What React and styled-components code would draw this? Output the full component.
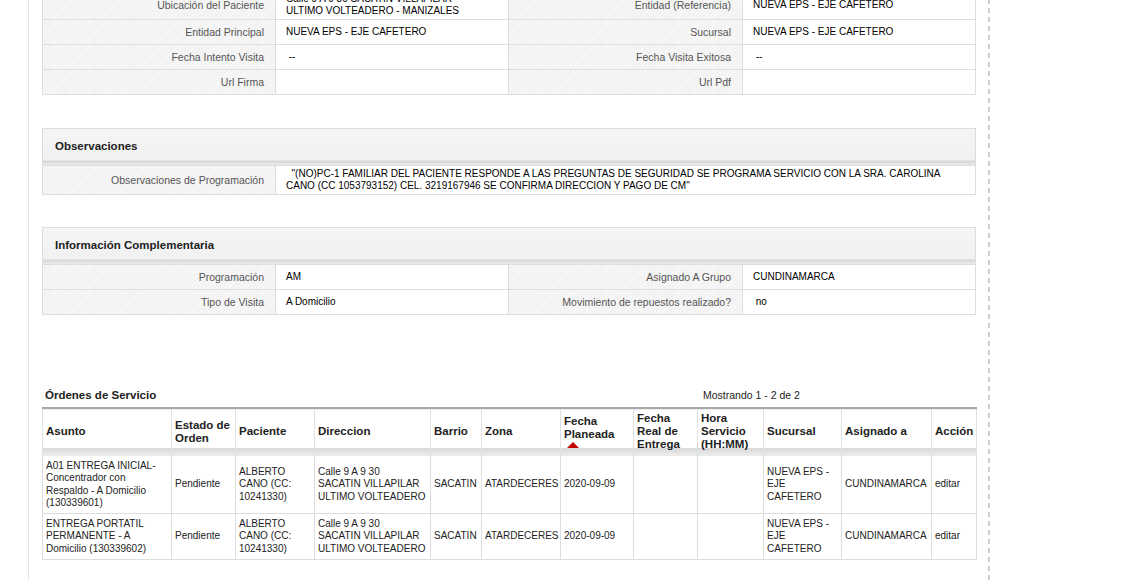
import React from 'react'
import styled, { createGlobalStyle } from 'styled-components'

const GlobalStyle = createGlobalStyle`
    html, body {
        margin: 0;
        padding: 0;
        background: #fff;
        font-family: "Liberation Sans", Arial, sans-serif;
        overflow: hidden;
    }
`

const address = ['Calle 9 A 9 30', 'SACATIN VILLAPILAR', 'ULTIMO VOLTEADERO']

const topRows = [
    ['Ubicación del Paciente', ['Calle 9 A 9 30 SACATIN VILLAPILAR', 'ULTIMO VOLTEADERO - MANIZALES'], 'Entidad (Referencia)', 'NUEVA EPS - EJE CAFETERO'],
    ['Entidad Principal', 'NUEVA EPS - EJE CAFETERO', 'Sucursal', 'NUEVA EPS - EJE CAFETERO'],
    ['Fecha Intento Visita', '\u00a0--', 'Fecha Visita Exitosa', '\u00a0--'],
    ['Url Firma', '', 'Url Pdf', ''],
]

const extraRows = [
    ['Programación', 'AM', 'Asignado A Grupo', 'CUNDINAMARCA'],
    ['Tipo de Visita', 'A Domicilio', 'Movimiento de repuestos realizado?', '\u00a0no'],
]

const columns = [
    { title: 'Asunto', width: 129 },
    { title: 'Estado de Orden', width: 64 },
    { title: 'Paciente', width: 79 },
    { title: 'Direccion', width: 116 },
    { title: 'Barrio', width: 51 },
    { title: 'Zona', width: 79 },
    { title: 'Fecha Planeada', width: 73, sorted: true },
    { title: 'Fecha Real de Entrega', width: 64 },
    { title: 'Hora Servicio (HH:MM)', width: 66 },
    { title: 'Sucursal', width: 78 },
    { title: 'Asignado a', width: 90 },
    { title: 'Acción', width: 45 },
]

const orders = [
    ['A01 ENTREGA INICIAL-Concentrador con Respaldo - A Domicilio (130339601)', 'Pendiente', 'ALBERTO CANO (CC: 10241330)', address, 'SACATIN', 'ATARDECERES', '2020-09-09', '', '', 'NUEVA EPS - EJE CAFETERO', 'CUNDINAMARCA', 'editar'],
    ['ENTREGA PORTATIL PERMANENTE - A Domicilio (130339602)', 'Pendiente', 'ALBERTO CANO (CC: 10241330)', address, 'SACATIN', 'ATARDECERES', '2020-09-09', '', '', 'NUEVA EPS - EJE CAFETERO', 'CUNDINAMARCA', 'editar'],
]

// a value is either plain text or a list of lines
function Lines({ value }) {
    if (!Array.isArray(value)) return value
    return value.map((line, i) => (
        <React.Fragment key={i}>
            {i > 0 && <br />}
            {line}
        </React.Fragment>
    ))
}

function PairRow({ row }) {
    return (
        <>
            <Label>{row[0]}</Label>
            <Value><span><Lines value={row[1]} /></span></Value>
            <Label>{row[2]}</Label>
            <Value><span><Lines value={row[3]} /></span></Value>
        </>
    )
}

export default function App() {
    return (
        <>
            <GlobalStyle />
            <Shell>
                <Section $gap="-10px">
                    {topRows.map((r) => <PairRow key={r[0]} row={r} />)}
                </Section>

                <Section $gap="33px">
                    <Header>Observaciones</Header>
                    <Label>Observaciones de Programación</Label>
                    <Value $span={3}>
                        {'\u00a0\u00a0"(NO)PC-1 FAMILIAR DEL PACIENTE RESPONDE A LAS PREGUNTAS DE SEGURIDAD SE PROGRAMA SERVICIO CON LA SRA. CAROLINA CANO (CC 1053793152) CEL. 3219167946 SE CONFIRMA DIRECCION Y PAGO DE CM"'}
                    </Value>
                </Section>

                <Section $gap="32px">
                    <Header>Información Complementaria</Header>
                    {extraRows.map((r) => <PairRow key={r[0]} row={r} />)}
                </Section>

                <TitleBar>
                    <Title>Órdenes de Servicio</Title>
                    <Paging>Mostrando 1 - 2 de 2</Paging>
                </TitleBar>

                <Orders>
                    <colgroup>
                        {columns.map((c) => <col key={c.title} style={{ width: c.width }} />)}
                    </colgroup>
                    <thead>
                        <tr>
                            {columns.map((c) => (
                                <th key={c.title}>
                                    {c.title}
                                    {c.sorted && <SortArrow />}
                                </th>
                            ))}
                        </tr>
                    </thead>
                    <tbody>
                        {orders.map((o, i) => (
                            <tr key={i}>
                                {o.map((v, j) => <td key={j}><Lines value={v} /></td>)}
                            </tr>
                        ))}
                    </tbody>
                </Orders>
            </Shell>
        </>
    )
}

const Shell = styled.div`
    box-sizing: border-box;
    margin-left: 28px;
    width: 962px;
    min-height: 100vh;
    padding: 0 14px 20px 13px;
    border-left: 1px solid #e3e3e3;
    background: repeating-linear-gradient(to bottom, #cdcdcd 0 5px, transparent 5px 9px) no-repeat right top / 2px 100%;
`

const Section = styled.div`
    display: grid;
    grid-template-columns: 232px 232px 233px 1fr;
    gap: 1px;
    width: 934px;
    box-sizing: border-box;
    border: 1px solid #dddddd;
    background: #dddddd;
    margin-top: ${(p) => p.$gap};
`

const Header = styled.div`
    grid-column: 1 / -1;
    height: 36px;
    box-sizing: border-box;
    padding: 0 0 2px 12px;
    display: flex;
    align-items: center;
    font-size: 11.5px;
    font-weight: bold;
    color: #222;
    background: linear-gradient(to bottom, #f5f5f5 0, #f1f1f1 calc(100% - 5px), #d6d6d6 calc(100% - 4px), #ececec 100%);
`

const Label = styled.div`
    min-height: 24px;
    box-sizing: border-box;
    padding: 2px 11px 2px 10px;
    display: flex;
    align-items: center;
    justify-content: flex-end;
    text-align: right;
    font-size: 10.5px;
    line-height: 12px;
    color: #555;
    background-color: #f2f2f2;
    background-image: repeating-linear-gradient(-45deg, rgba(255, 255, 255, 0.55) 0 1px, transparent 1px 3px);
`

const Value = styled.div`
    grid-column: span ${(p) => p.$span || 1};
    min-height: 24px;
    box-sizing: border-box;
    padding: 2px 10px;
    display: flex;
    align-items: center;
    font-size: 10px;
    line-height: 12px;
    color: #000;
    background: #fff;
`

const TitleBar = styled.div`
    display: grid;
    grid-template-columns: 661px auto;
    align-items: center;
    height: 16px;
    margin-top: 72px;
    margin-bottom: 4px;
    width: 934px;
`

const Title = styled.div`
    padding-left: 3px;
    font-size: 11.5px;
    font-weight: bold;
    color: #222;
`

const Paging = styled.div`
    font-size: 10.5px;
    color: #222;
`

const Orders = styled.table`
    width: 934px;
    table-layout: fixed;
    border-collapse: collapse;
    border-top: 2px solid #a8a8a8;
    border-left: 1px solid #dddddd;
    border-right: 1px solid #dddddd;

    th {
        padding: 3px 3px 5px 3px;
        font-size: 11.5px;
        font-weight: bold;
        line-height: 13px;
        text-align: left;
        vertical-align: middle;
        color: #222;
        border-left: 1px solid #e2e2e2;
        border-right: 1px solid #e2e2e2;
        background: linear-gradient(to bottom, #fff 0, #fff calc(100% - 8px), #d9d9d9 calc(100% - 8px), #ededed 100%);
    }

    td {
        padding: 4px 2px 4px 3px;
        font-size: 10px;
        line-height: 12.3px;
        vertical-align: middle;
        color: #222;
        border: 1px solid #dddddd;
        border-top: none;
    }
`

const SortArrow = styled.span`
    display: block;
    width: 0;
    height: 0;
    margin: 1px 0 0 3px;
    border-left: 6px solid transparent;
    border-right: 6px solid transparent;
    border-bottom: 6px solid #c40000;
`
